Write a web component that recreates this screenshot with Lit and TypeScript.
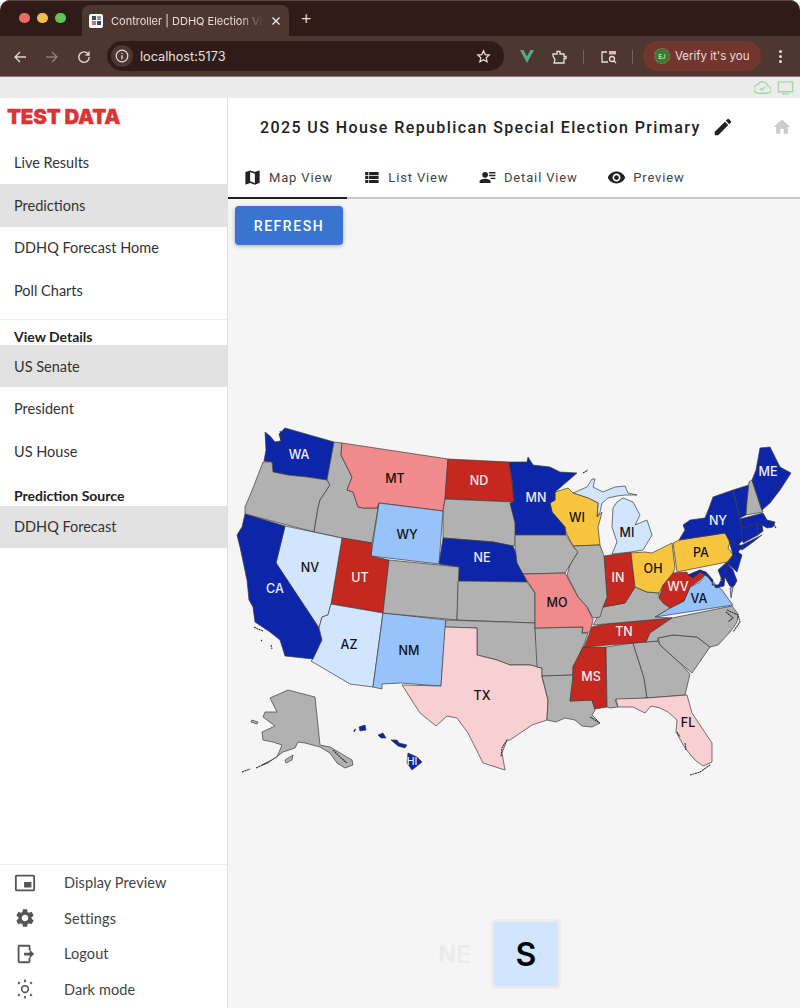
import { LitElement, html, css, svg } from "lit";
import { customElement } from "lit/decorators.js";

const C = { db: "#0d25a8", r: "#c5281f", sal: "#f08a8c", pk: "#f8d0d3", pb: "#d1e5ff", mb: "#97c3fa", y: "#f8c541", g: "#b1b1b1" };

const STATES: [string, string][] = [
  [C.db, "265,432 270,436 275,442 281,441 279,434 285,428 334,442 327,480 307,477 288,475 273,472 272,462 264,461 266,450"],
  [C.g, "263,462 272,462 273,472 288,475 307,477 327,480 330,485 320,500 318,508 314,532 245,514 245,507 253,488"],
  [C.g, "334,442 342,443 341,455 347,467 352,477 347,490 353,492 358,507 363,508 377,508 379,503 372,543 342,538 314,532 318,508 320,500 330,485 327,480"],
  [C.sal, "342,443 448,459 445,499 443,511 379,503 377,508 363,508 358,507 353,492 347,490 352,477 347,467 341,455"],
  [C.r, "448,459 509,462 512,480 514,502 445,499"],
  [C.g, "445,499 514,502 512,507 516,520 515,545 513,546 503,544 493,542 443,538 443,511"],
  [C.mb, "379,503 443,511 439,564 371,556"],
  [C.db, "443,538 493,542 503,544 513,546 517,556 522,570 527,582 458,581 459,567 439,564"],
  [C.r, "342,538 372,543 371,556 389,560 383,613 331,604"],
  [C.pb, "285,526 342,538 331,604 328,615 322,617 319,628 276,563"],
  [C.db, "245,514 285,526 276,563 319,628 322,640 313,659 285,656 280,640 270,632 255,622 253,607 249,600 247,580 240,547 237,535 242,527"],
  [C.pb, "331,604 383,613 373,687 350,684 311,661 313,659 322,640 319,628 322,617 328,615"],
  [C.mb, "383,613 446,620 441,686 401,683 382,684 382,689 373,687"],
  [C.g, "389,560 459,567 457,620 383,613"],
  [C.g, "458,581 527,582 535,593 535,623 457,620"],
  [C.g, "446,620 535,623 535,628 537,650 542,668 530,665 510,665 497,660 477,655 477,628 445,627"],
  [C.pk, "445,627 477,628 477,655 497,660 510,665 530,665 542,668 542,677 548,700 547,720 532,725 510,740 507,740 502,753 505,770 483,763 468,733 457,718 447,716 436,726 420,713 402,685 441,686"],
  [C.g, "535,628 583,627 582,633 588,633 583,647 573,667 573,675 542,676 542,668 537,667"],
  [C.g, "542,676 573,675 570,701 592,700 595,710 592,715 600,723 592,727 582,726 575,720 565,718 556,722 547,720 548,700"],
  [C.r, "583,647 606,647 607,707 595,709 592,700 570,701 573,680 573,667"],
  [C.g, "606,647 633,643 644,678 647,698 615,700 618,707 610,708 607,707"],
  [C.g, "633,643 658,641 660,645 680,663 690,674 685,695 647,698 644,678"],
  [C.pk, "616,699 647,698 687,695 692,713 702,728 712,743 712,762 703,766 695,760 685,748 676,732 677,720 668,712 660,708 651,706 645,713 633,707 618,707"],
  [C.g, "658,638 673,635 697,637 710,647 692,673 680,663 660,645"],
  [C.r, "584,647 646,642 650,633 672,618 605,624 592,627"],
  [C.g, "672,618 732,606 738,614 737,622 730,632 718,645 710,647 697,637 673,635 658,638 658,641 646,642 650,633"],
  [C.mb, "655,617 733,605 727,597 722,590 716,585 710,578 706,573 700,582 690,587 684,601 670,608"],
  [C.r, "659,598 663,585 673,573 687,572 688,575 700,570 706,573 700,580 690,587 684,601 670,608 663,603"],
  [C.g, "593,625 603,607 625,603 635,587 647,592 659,593 659,598 663,603 670,608 655,617 672,618 605,624"],
  [C.r, "604,556 631,552 635,587 625,603 603,607 607,597"],
  [C.y, "631,553 645,552 652,553 672,543 675,568 673,573 663,585 659,593 647,592 635,587"],
  [C.pb, "612,554 631,552 643,550 652,535 647,520 635,525 640,515 633,502 623,498 617,502 613,508 612,527 617,542"],
  [C.pb, "573,493 587,487 592,479 595,479 593,487 603,492 615,487 625,486 628,493 637,495 625,495 617,496 608,498 602,503 600,512 597,517 598,503 588,498"],
  [C.y, "555,492 568,488 573,493 588,498 598,503 597,517 602,512 600,520 598,527 600,545 573,546 566,532 565,527 552,512 550,503 555,500"],
  [C.db, "509,462 527,462 528,457 533,465 550,467 560,472 577,473 555,492 555,500 550,503 552,512 565,527 566,535 515,535 515,523 510,503 514,502 512,480"],
  [C.g, "515,535 566,535 573,546 578,552 570,565 565,573 523,574 517,563 515,546"],
  [C.g, "573,546 600,545 604,556 607,597 603,607 600,617 593,618 587,607 578,597 567,575 570,565 578,552"],
  [C.sal, "523,574 565,573 578,597 587,607 593,620 590,632 582,633 583,627 535,628 535,593"],
  [C.y, "673,543 679,540 725,533 730,542 728,548 733,555 727,562 677,572"],
  [C.db, "679,540 685,530 683,525 690,520 705,518 709,508 713,497 733,490 740,518 743,540 738,545 730,542 725,533"],
  [C.db, "738,547 762,535 753,542 742,550"],
  [C.db, "729,541 743,546 738,552 742,555 737,572 727,563 733,555"],
  [C.db, "688,575 700,570 706,572 713,580 712,585 718,585 722,580 718,570 727,562 735,585 730,586 725,577 724,586 716,588 708,577 700,572 693,578"],
  [C.db, "727,563 733,570 737,581 733,587 730,586 725,577"],
  [C.mb, "730,588 733,587 731,598"],
  [C.db, "733,490 749,485 747,502 746,515 740,518"],
  [C.g, "749,482 752,480 761,508 763,512 746,515 747,502"],
  [C.db, "740,519 763,513 767,520 775,522 773,527 767,528 762,525 741,528"],
  [C.db, "741,528 757,524 758,535 743,543"],
  [C.db, "757,524 762,524 763,531 758,535"],
  [C.db, "752,480 756,470 760,448 770,447 780,467 791,473 780,490 770,503 762,510"],
  [C.g, "270,698 288,690 315,697 320,745 330,747 352,760 353,765 345,768 337,763 330,753 320,747 305,743 298,742 295,748 283,752 268,763 262,765 277,757 282,745 273,742 263,740 262,732 275,726 263,717 265,712 277,712"],
  [C.g, "285,760 293,755 292,760 286,763"],
  [C.g, "252,720 258,722 257,724 251,722"],
  [C.db, "408,753 417,757 422,762 412,770 407,763"],
  [C.db, "359,727 365,725 366,730 360,731"],
  [C.db, "378,735 383,733 386,738 381,738"],
  [C.db, "391,740 397,740 399,743 407,745 405,748 398,746"],
  [C.db, "354,730 356,729 354,732"],
];

const MARKS: string[] = [
  "280,431 282,437 279,443 277,451",
  "254,627 258,629 263,631",
  "261,640 262,641",
  "271,645 272,649",
  "246,574 248,580",
  "583,473 588,470",
  "775,490 779,487 782,485",
  "727,610 738,615 740,622 733,632",
  "726,612 733,618 728,622",
  "722,576 720,583",
  "333,750 340,757 347,763",
  "507,740 502,748 501,757",
  "677,732 680,737",
  "685,743 686,750",
  "690,775 700,772 710,765",
  "590,717 600,723",
  "242,772 250,769",
  "256,768 267,763",
  "772,522 776,528",
];

const LABELS: [string, number, number, boolean][] = [
  ["WA", 299, 454, true], ["MT", 395, 478, false], ["ND", 479, 480, true], ["WY", 407, 534, false],
  ["NV", 310, 567, false], ["UT", 360, 577, true], ["CA", 275, 588, true], ["NE", 482, 557, true],
  ["AZ", 349, 644, false], ["NM", 409, 650, false], ["TX", 482, 695, false], ["MN", 536, 497, true],
  ["WI", 577, 517, false], ["MI", 627, 532, false], ["OH", 653, 568, false], ["IN", 618, 577, true],
  ["MO", 557, 602, false], ["NY", 718, 520, true], ["PA", 701, 552, false], ["WV", 678, 586, true],
  ["VA", 699, 598, false], ["ME", 768, 471, true], ["TN", 624, 631, true], ["MS", 591, 676, true],
  ["FL", 688, 722, false], ["HI", 412, 761, true],
];

const ICONS: Record<string, string> = {
  map: "M20.5 3l-.16.03L15 5.1 9 3 3.36 4.9c-.21.07-.36.25-.36.48V20.5c0 .28.22.5.5.5l.16-.03L9 18.9l6 2.1 5.64-1.9c.21-.07.36-.25.36-.48V3.5c0-.28-.22-.5-.5-.5zM15 19l-6-2.11V5l6 2.11V19z",
  list: "M4 14h4v-4H4v4zm0 5h4v-4H4v4zM4 9h4V5H4v4zm5 5h12v-4H9v4zm0 5h12v-4H9v4zM9 5v4h12V5H9z",
  detail: "M9 5a3.6 3.6 0 1 1 0 7.2A3.6 3.6 0 0 1 9 5zM2 19v-2c0-2.4 4.6-3.4 7-3.4s7 1 7 3.4v2H2zM14 5h8v1.8h-8V5zm0 3.6h8v1.8h-8V8.600zm2 3.600h6V14h-6v-1.800z",
  eye: "M12 4.500C7 4.500 2.730 7.610 1 12c1.730 4.390 6 7.500 11 7.500s9.270-3.110 11-7.500c-1.730-4.390-6-7.500-11-7.500zM12 17c-2.760 0-5-2.240-5-5s2.240-5 5-5 5 2.240 5 5-2.240 5-5 5zm0-8c-1.660 0-3 1.340-3 3s1.340 3 3 3 3-1.340 3-3-1.340-3-3-3z",
  edit: "M3 17.250V21h3.750L17.810 9.940l-3.750-3.750L3 17.250zM20.710 7.040c.39-.39.39-1.020 0-1.410l-2.340-2.340c-.39-.39-1.020-.39-1.410 0l-1.830 1.830 3.750 3.750 1.830-1.830z",
  home: "M10 20v-6h4v6h5v-8h3L12 3 2 12h3v8z",
  pip: "M19 11h-8v6h8v-6zm4 8V4.980C23 3.880 22.100 3 21 3H3c-1.100 0-2 .88-2 1.980V19c0 1.100.9 2 2 2h18c1.100 0 2-.9 2-2zm-2 .02H3V4.970h18v14.050z",
  gear: "M19.140 12.940c.04-.3.06-.61.06-.94 0-.32-.02-.64-.07-.94l2.030-1.580c.18-.14.23-.41.12-.61l-1.920-3.320c-.12-.22-.37-.29-.59-.22l-2.390.96c-.5-.38-1.030-.7-1.620-.94l-.36-2.540c-.04-.24-.24-.41-.48-.41h-3.840c-.24 0-.43.17-.47.41l-.36 2.540c-.59.24-1.130.57-1.620.94l-2.390-.96c-.22-.08-.47 0-.59.22L2.740 8.870c-.12.21-.08.47.12.61l2.030 1.580c-.05.3-.09.63-.09.94s.02.64.07.94l-2.030 1.580c-.18.14-.23.41-.12.61l1.920 3.320c.12.22.37.29.59.22l2.390-.96c.5.38 1.030.7 1.620.94l.36 2.540c.05.24.24.41.48.41h3.840c.24 0 .44-.17.47-.41l.36-2.540c.59-.24 1.130-.56 1.620-.94l2.390.96c.22.08.47 0 .59-.22l1.920-3.320c.12-.22.07-.47-.12-.61l-2.010-1.580zM12 15.600c-1.980 0-3.600-1.620-3.600-3.600s1.620-3.600 3.600-3.600 3.600 1.620 3.600 3.600-1.620 3.600-3.600 3.600z",
  logout: "M6 2h10a2 2 0 0 1 2 2v4h-2V4H6v16h10v-4h2v4a2 2 0 0 1-2 2H6a2 2 0 0 1-2-2V4a2 2 0 0 1 2-2zm5 8.500h6V7l5 5-5 5v-3.500h-6v-3z",
  sun: "M12 7.500a4.500 4.500 0 1 1 0 9 4.500 4.500 0 0 1 0-9zm0 1.700a2.800 2.800 0 1 0 0 5.600 2.800 2.800 0 0 0 0-5.600zM11 2.500l1-1.500 1 1.500v2h-2v-2zM11 19.500h2v2l-1 1.500-1-1.500v-2zM3.800 5.500l1.700-1.700 1.500 1.500-1.700 1.700-1.500-1.500zM17 18.700l1.700-1.700 1.500 1.500-1.700 1.700-1.500-1.500zM3.800 18.500l1.500-1.500 1.700 1.700-1.500 1.500-1.700-1.700zM17 5.300l1.500-1.500 1.700 1.700-1.500 1.500-1.700-1.700z",
};

const icon = (name: string, size: number, color: string) => html`<svg class="ico" width=${size} height=${size} viewBox="0 0 24 24" style="color:${color}"><path fill="currentColor" d=${ICONS[name]}></path></svg>`;

@customElement("app-root")
export class AppRoot extends LitElement {
  static styles = css`
    :host { display: flex; flex-direction: column; width: 800px; height: 1008px; overflow: hidden; background: #fff; font-family: "Lato", sans-serif; }
    .ico { display: block; flex: none; }
    .tabbar { height: 36px; flex: none; background: #2f1c19; display: flex; align-items: flex-end; border-radius: 10px 10px 0 0; box-shadow: inset 0 1px 0 #5c4540; }
    .lights { display: flex; gap: 7.500px; padding: 0 0 13px 19px; width: 63px; box-sizing: content-box; }
    .lights i { width: 10.500px; height: 10.500px; border-radius: 50%; }
    .tab { width: 207px; height: 31px; background: #4e3631; border-radius: 8px 8px 0 0; display: flex; align-items: center; padding: 0 7px; box-sizing: border-box; gap: 8px; color: #e6dedc; font: 11px "Inter", sans-serif; }
    .fav { width: 14px; height: 14px; background: #fff; border-radius: 2px; flex: none; display: flex; align-items: center; justify-content: center; }
    .tabtitle { width: 152px; white-space: nowrap; -webkit-mask-image: linear-gradient(90deg, #000 85%, transparent); }
    .plus { color: #e6dedc; font: 300 19px "Inter", sans-serif; margin: 0 0 7px 11px; }
    .toolbar { height: 41px; flex: none; background: #4e3631; display: flex; align-items: center; box-shadow: inset 0 -1px 0 #8a7a76; }
    .nav { display: flex; gap: 18px; padding-left: 13px; width: 107px; box-sizing: border-box; flex: none; }
    .omni { width: 397px; height: 30px; margin-top: -1px; border-radius: 15px; background: #2f1c19; display: flex; align-items: center; color: #e8e0de; font: 12.700px "Inter", sans-serif; padding: 0 13px 0 4px; box-sizing: border-box; flex: none; }
    .info { width: 22px; height: 22px; border-radius: 50%; background: #4e3631; display: flex; align-items: center; justify-content: center; margin-right: 7px; }
    .omni span { flex: 1; }
    .ext { display: flex; align-items: center; margin-left: 16px; gap: 15px; flex: none; }
    .vue { margin-right: 3px; }
    .search { margin-left: 2px; }
    .sep { width: 1px; height: 14px; background: #75615c; }
    .verify { width: 118px; height: 30px; margin: -1px 0 0 -5px; background: #733530; border-radius: 15px; display: flex; align-items: center; box-sizing: border-box; padding-left: 11px; gap: 5px; color: #eadfdd; font: 11.500px "Inter", sans-serif; white-space: nowrap; flex: none; }
    .avatar { width: 14px; height: 14px; border-radius: 50%; background: #3c7a2e; border: 1.500px dashed #b06a5f; color: #fff; font-size: 6px; display: flex; align-items: center; justify-content: center; box-sizing: content-box; flex: none; }
    .dots { margin-left: 18px; display: flex; flex-direction: column; gap: 2px; }
    .dots i { width: 3px; height: 3px; border-radius: 50%; background: #e8e0de; }
    .strip { height: 21px; flex: none; background: #ececec; display: flex; align-items: center; justify-content: flex-end; gap: 6px; padding-right: 6px; box-sizing: border-box; }
    .body { flex: 1; display: flex; min-height: 0; }
    .side { width: 228px; flex: none; box-sizing: border-box; border-right: 1px solid #e0e0e0; display: flex; flex-direction: column; background: #fff; color: #333; }
    .logo { height: 43px; padding: 9px 0 0 7px; box-sizing: border-box; color: #d93535; font: 900 20.500px/20px "Inter", sans-serif; letter-spacing: -0.200px; -webkit-text-stroke: 0.300px #d93535; }
    .item { height: 42.800px; display: flex; align-items: center; padding-left: 14px; font-size: 14.500px; }
    .item.on { background: #e2e2e2; }
    .div { height: 1px; background: #eee; margin-top: 7px; }
    .h { font-weight: 700; font-size: 14px; color: #222; padding: 9px 0 0 14px; height: 24.500px; box-sizing: border-box; line-height: 15px; }
    .h.b { height: 32.500px; padding-top: 15px; }
    .grow { flex: 1; }
    .foot { border-top: 1px solid #eee; padding: 0 0 1px 14px; display: flex; flex-direction: column; }
    .foot div { height: 35.500px; display: flex; align-items: center; font-size: 14.500px; color: #444; letter-spacing: 0.100px; }
    .foot .ico { margin-right: 28px; }
    .main { flex: 1; min-width: 0; display: flex; flex-direction: column; background: #f5f5f5; }
    .head { height: 60px; flex: none; background: #fff; display: flex; align-items: center; font: 500 16px "Roboto", sans-serif; letter-spacing: 1.400px; color: #222; padding: 0 0 2px 32px; box-sizing: border-box; }
    .head .t { margin-right: 11px; white-space: nowrap; }
    .head .home { margin-left: auto; margin-right: 8px; }
    .tabs { flex: none; background: #fff; display: flex; border-bottom: 2px solid #c8c8c8; height: 39px; }
    .tb { display: flex; align-items: center; gap: 7px; padding: 0 14.500px 0 15px; font: 400 13px "Roboto", sans-serif; letter-spacing: 0.850px; color: #444; margin-bottom: -2px; border-bottom: 2px solid transparent; box-sizing: border-box; height: 41px; white-space: nowrap; }
    .tb.on { border-bottom-color: #222; }
    .refresh { align-self: flex-start; margin: 7px 0 0 7px; width: 108px; height: 39px; border: 0; border-radius: 4px; background: #3a74d1; color: #fff; font: 500 14px "Roboto", sans-serif; letter-spacing: 1.550px; box-shadow: 0 1px 4px rgba(0,0,0,.3); flex: none; }
    .map { display: block; flex: none; margin-top: 155px; }
    .map text { font: 500 12.500px "Inter", sans-serif; text-anchor: middle; dominant-baseline: central; }
    .map .hi { font-size: 10.500px; }
    .bottom { display: flex; align-items: center; margin: 139px 0 0 210px; gap: 18px; }
    .ne { font: 600 24px "Inter", sans-serif; color: #ebebeb; width: 35px; }
    .s { width: 70px; height: 70px; box-sizing: border-box; border: 3px solid #ececec; border-radius: 5px; background: #d1e5ff; display: flex; align-items: center; justify-content: center; font: 600 32px "Inter", sans-serif; color: #000; }
  `;

  render() {
    return html`
      <div class="tabbar">
        <div class="lights"><i style="background:#ed6a5e"></i><i style="background:#f5bf4f"></i><i style="background:#61c554"></i></div>
        <div class="tab">
          <div class="fav"><svg width="11" height="11" viewBox="0 0 11 11"><rect x="1" y="1" width="4" height="4" fill="#3d4a66"/><rect x="6" y="1" width="4" height="4" fill="#8f9ab3"/><rect x="1" y="6" width="4" height="4" fill="#b77"/><rect x="6" y="6" width="4" height="4" fill="#3d4a66"/></svg></div>
          <div class="tabtitle">Controller | DDHQ Election Vi</div>
          <svg width="10" height="10" viewBox="0 0 10 10"><path d="M1.500 1.500l7 7m0-7l-7 7" stroke="#eee" stroke-width="1.300"/></svg>
        </div>
        <div class="plus">+</div>
      </div>
      <div class="toolbar">
        <div class="nav">
          <svg width="14" height="14" viewBox="0 0 14 14"><path d="M13 7H2m5-5L2 7l5 5" fill="none" stroke="#e0d6d3" stroke-width="1.400"/></svg>
          <svg width="14" height="14" viewBox="0 0 14 14"><path d="M1 7h11M7 2l5 5-5 5" fill="none" stroke="#917f7a" stroke-width="1.400"/></svg>
          <svg width="14" height="14" viewBox="0 0 14 14"><path d="M11.500 4.500A5.200 5.200 0 1 0 12.200 7M12 1.500v3.500H8.500" fill="none" stroke="#e0d6d3" stroke-width="1.400"/></svg>
        </div>
        <div class="omni">
          <div class="info"><svg width="14" height="14" viewBox="0 0 14 14"><circle cx="7" cy="7" r="5.800" fill="none" stroke="#e8e0de" stroke-width="1.200"/><path d="M7 6.300v4M7 3.700v1.300" stroke="#e8e0de" stroke-width="1.300"/></svg></div>
          <span>localhost:5173</span>
          <svg width="15" height="15" viewBox="0 0 24 24"><path d="M12 3l2.700 6 6.500.7-4.900 4.400 1.400 6.400L12 17.200l-5.700 3.300 1.400-6.400L2.800 9.700 9.300 9z" fill="none" stroke="#e8e0de" stroke-width="2"/></svg>
        </div>
        <div class="ext">
          <svg class="vue" width="14" height="13" viewBox="0 0 14 13"><path d="M0 0h3.500L7 6.500 10.500 0H14L7 13z" fill="#4fae8a"/></svg>
          <svg width="16" height="15" viewBox="0 0 16 15"><path d="M1 5h4V2.500h3V5h4v2.500h2v2h-2V14H2l1-3.500L1 7z" fill="none" stroke="#e8e0de" stroke-width="1.300"/></svg>
          <div class="sep"></div>
          <svg class="search" width="16" height="14" viewBox="0 0 16 14"><path d="M6 2H1v10h6" fill="none" stroke="#e8e0de" stroke-width="1.300"/><rect x="8" y="1" width="7" height="3.500" fill="#e8b8b0"/><circle cx="11" cy="9" r="2.500" fill="none" stroke="#e8e0de" stroke-width="1.300"/><path d="M13 11l2 2" stroke="#e8e0de" stroke-width="1.300"/></svg>
          <div class="sep"></div>
          <div class="verify"><div class="avatar">EJ</div><span>Verify it's you</span></div>
        </div>
        <div class="dots"><i></i><i></i><i></i></div>
      </div>
      <div class="strip">
        <svg width="17" height="17" viewBox="0 0 24 24"><path d="M19.400 10A7.500 7.500 0 0 0 5.400 8 6 6 0 0 0 6 20h13a5 5 0 0 0 .4-10zM8.500 13l2.700 2.700 4.500-4.500" fill="none" stroke="#a6d6a6" stroke-width="2"/></svg>
        <svg width="17" height="17" viewBox="0 0 24 24"><path d="M2 4h20v14H2zM7 21h10" fill="none" stroke="#a6d6a6" stroke-width="2"/></svg>
      </div>
      <div class="body">
        <aside class="side">
          <div class="logo">TEST DATA</div>
          <div class="item">Live Results</div>
          <div class="item on">Predictions</div>
          <div class="item">DDHQ Forecast Home</div>
          <div class="item">Poll Charts</div>
          <div class="div"></div>
          <div class="h">View Details</div>
          <div class="item on">US Senate</div>
          <div class="item">President</div>
          <div class="item">US House</div>
          <div class="h b">Prediction Source</div>
          <div class="item on">DDHQ Forecast</div>
          <div class="grow"></div>
          <div class="foot">
            <div>${icon("pip", 22, "#555")}Display Preview</div>
            <div>${icon("gear", 22, "#555")}Settings</div>
            <div>${icon("logout", 22, "#555")}Logout</div>
            <div>${icon("sun", 22, "#555")}Dark mode</div>
          </div>
        </aside>
        <main class="main">
          <div class="head"><span class="t">2025 US House Republican Special Election Primary</span>${icon("edit", 22, "#222")}<span class="home">${icon("home", 20, "#ccc")}</span></div>
          <div class="tabs">
            <div class="tb on">${icon("map", 19, "#222")}Map View</div>
            <div class="tb">${icon("list", 19, "#222")}List View</div>
            <div class="tb">${icon("detail", 19, "#222")}Detail View</div>
            <div class="tb">${icon("eye", 19, "#222")}Preview</div>
          </div>
          <button class="refresh">REFRESH</button>
          <svg class="map" width="572" height="380" viewBox="228 400 572 380">
            ${STATES.map(([f, p]) => svg`<polygon points=${p} fill=${f} stroke="#3c3c3c" stroke-width="0.700" stroke-linejoin="round"></polygon>`)}
            ${MARKS.map((p) => svg`<polyline points=${p} fill="none" stroke="#333" stroke-width="1.100" stroke-dasharray="2 .6"></polyline>`)}
            ${LABELS.map(([t, x, y, w]) => svg`<text class=${t === "HI" ? "hi" : ""} x=${x} y=${y} fill=${w ? "#eee" : "#111"}>${t}</text>`)}
          </svg>
          <div class="bottom"><div class="ne">NE</div><div class="s">S</div></div>
        </main>
      </div>
    `;
  }
}
